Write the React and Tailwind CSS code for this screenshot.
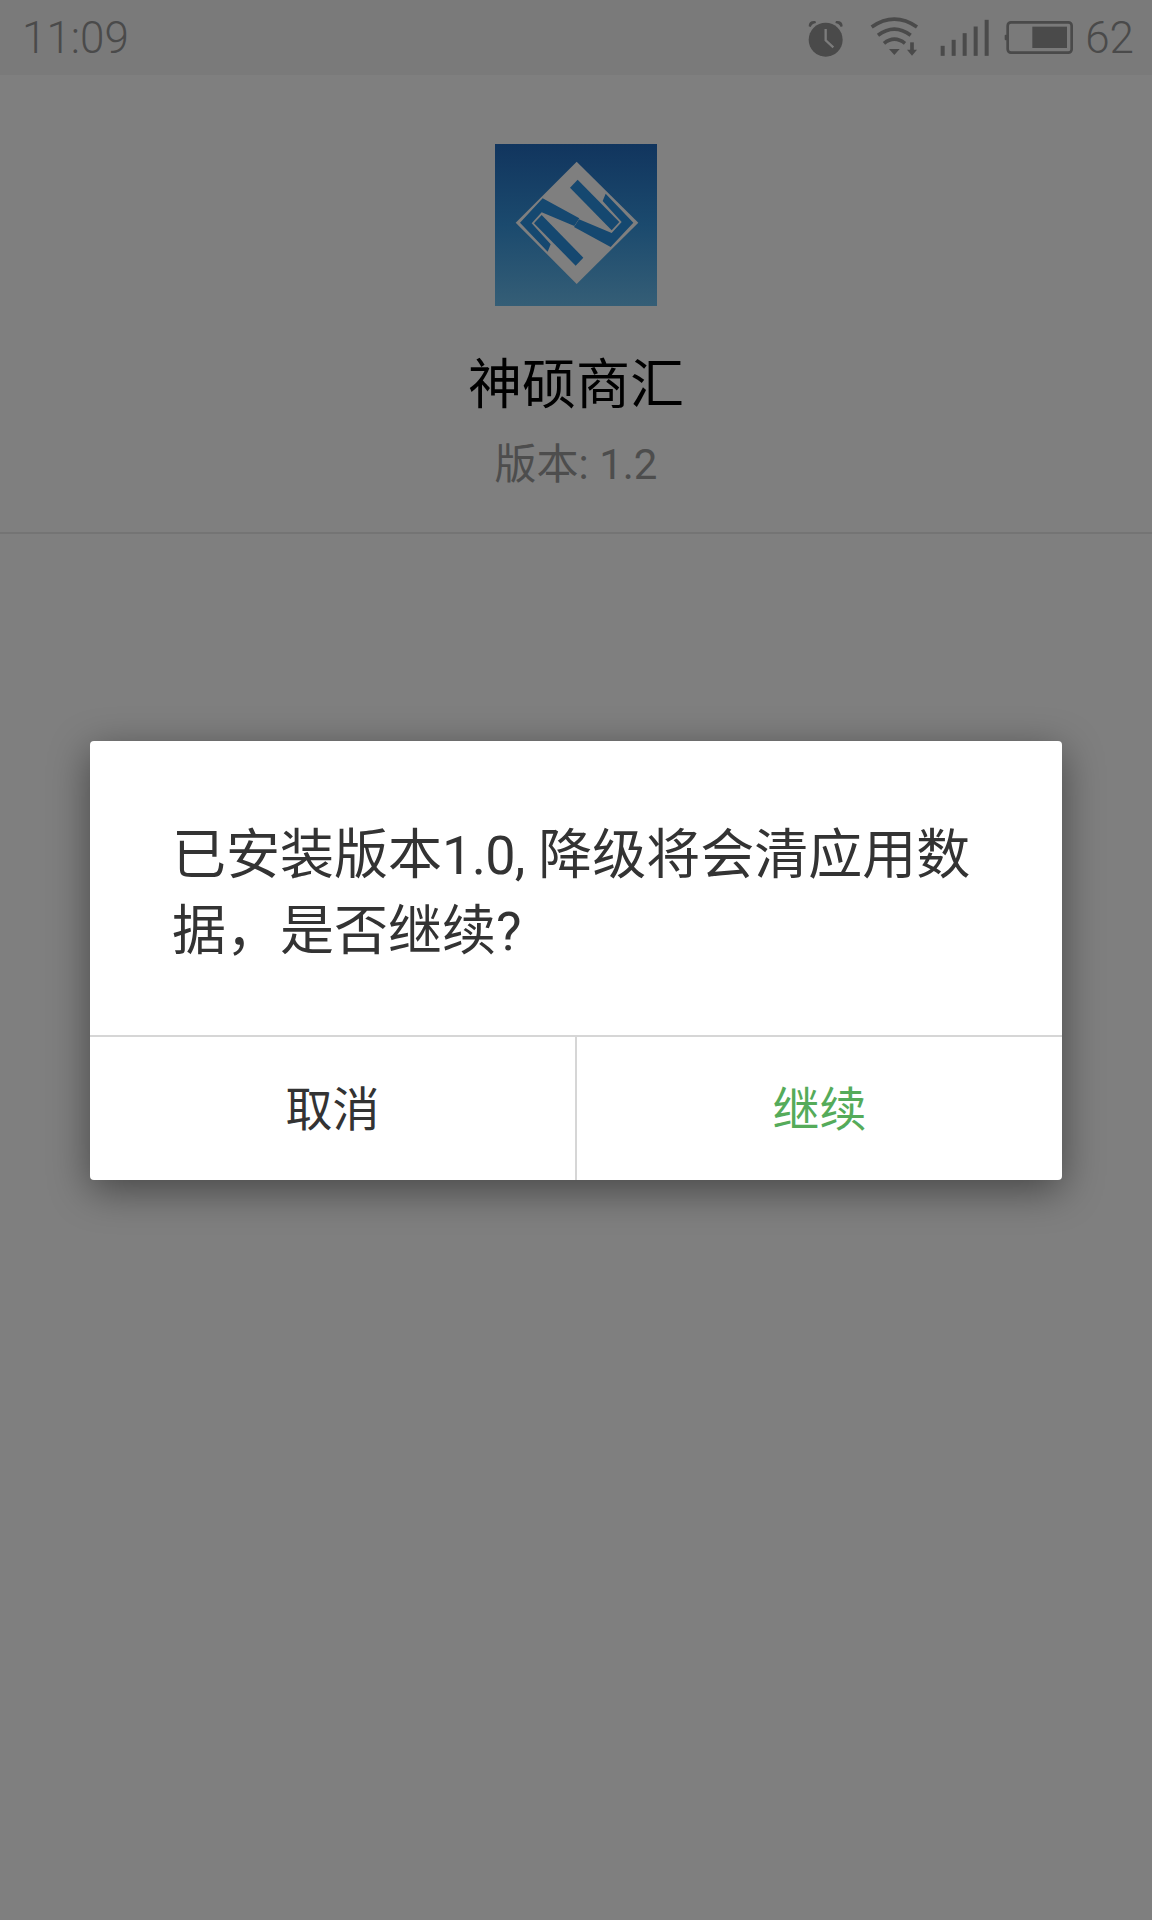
import React from 'react';

const FONT = 'font-["Roboto","Noto_Sans_CJK_SC",sans-serif]';

function AlarmIcon() {
  return (
    <svg width="36" height="38" viewBox="24 28 108 114">
      <path d="M26 50 Q26 32 46 34 L48 40 Q36 42 32 52 Z M128 50 Q128 32 108 34 L106 40 Q118 42 122 52 Z" fill="#4a4a4a" />
      <circle cx="77" cy="90" r="51" fill="#4a4a4a" />
      <path d="M77 58 V92 L100 113" fill="none" stroke="#7c7c7c" strokeWidth="7" />
    </svg>
  );
}

function WifiIcon() {
  return (
    <svg width="50" height="41" viewBox="210 22 150 123">
      <g fill="none" stroke="#4a4a4a" strokeWidth="11">
        <path d="M215 52 Q283 5 351 52" />
        <path d="M234 77 Q283 40 332 77" />
        <path d="M252 101 Q283 76 315 101" />
        <path d="M336 98 V126" />
      </g>
      <path d="M267 118 H299 L283 136 Z M321 120 H351 L336 138 Z" fill="#4a4a4a" />
    </svg>
  );
}

function SignalIcon() {
  return (
    <svg width="50" height="37" viewBox="418 28 150 110" fill="#4a4a4a">
      <rect x="420" y="108" width="12" height="30" />
      <rect x="453" y="90" width="12" height="48" />
      <rect x="486" y="70" width="12" height="68" />
      <rect x="519" y="50" width="12" height="88" />
      <rect x="552" y="30" width="12" height="108" />
    </svg>
  );
}

function BatteryIcon() {
  return (
    <svg width="70" height="36" viewBox="40 30 210 108">
      <rect x="51" y="37" width="192" height="91" rx="10" fill="none" stroke="#4a4a4a" strokeWidth="8" />
      <rect x="42" y="74" width="8" height="17" rx="3" fill="#4a4a4a" />
      <rect x="125" y="50" width="104" height="64" fill="#4a4a4a" />
    </svg>
  );
}

function AppLogo() {
  return (
    <svg width="162" height="162" viewBox="-45 -33 486 486">
      <defs>
        <linearGradient id="logoBg" x1="0" y1="0" x2="0" y2="1">
          <stop offset="0" stopColor="#11355e" />
          <stop offset="0.5" stopColor="#1b4a6e" />
          <stop offset="1" stopColor="#355e76" />
        </linearGradient>
      </defs>
      <rect x="-45" y="-33" width="486" height="486" fill="url(#logoBg)" />
      <polygon points="200,20 385,203 200,387 17,203" fill="#7f7f7f" />
      <g fill="#154870">
        <polygon points="98,130 208,190 193,213 95,172 65,205 122,268 113,290 30,203" />
        <polygon points="302,276 192,216 207,193 305,234 335,201 278,138 287,116 370,203" />
        <polygon points="95,180 72,205 197,332 220,308" />
        <polygon points="305,226 328,201 203,74 180,98" />
      </g>
    </svg>
  );
}

export default function App() {
  return (
    <div className={`relative h-[1920px] w-[1152px] overflow-hidden bg-[#7f7f7f] ${FONT}`}>
      <div className="flex h-[75px] items-center justify-between bg-[#7a7a7a] pl-[22px] pr-[18px] text-[44px] font-light text-[#4a4a4a]">
        <span>11:09</span>
        <div className="flex items-center">
          <AlarmIcon />
          <div className="ml-[26px]"><WifiIcon /></div>
          <div className="ml-5"><SignalIcon /></div>
          <div className="ml-3.5"><BatteryIcon /></div>
          <span className="ml-[11px]">62</span>
        </div>
      </div>

      <div className="flex h-[459px] flex-col items-center border-b-2 border-[#747474] pt-[69px]">
        <AppLogo />
        <div className="mt-[43px] text-[54px] leading-[74px] text-black">神硕商汇</div>
        <div className="mt-[13px] text-[42px] leading-[58px] text-[#4d4d4d]">版本: 1.2</div>
      </div>

      <div className="absolute inset-0 px-[90px] pt-[741px]">
        <div className="overflow-hidden rounded-[4px] bg-white shadow-[0_10px_40px_rgba(0,0,0,0.45)]">
          <div className="h-[294px] pl-[82px] pr-[80px] pt-[77px] text-[54px] leading-[76px] text-[#333333]">
            已安装版本<span className="tracking-[-0.7px]">1.0,</span> 降级将会清应用数据，是否继续?
          </div>
          <div className="flex h-[145px] border-t-2 border-[#d6d6d6] text-[47px]">
            <div className="flex flex-1 items-center justify-center border-r-2 border-[#d6d6d6] pt-1 text-[#333333]">取消</div>
            <div className="flex flex-1 items-center justify-center pt-1 text-[#55ab5a]">继续</div>
          </div>
        </div>
      </div>
    </div>
  );
}
